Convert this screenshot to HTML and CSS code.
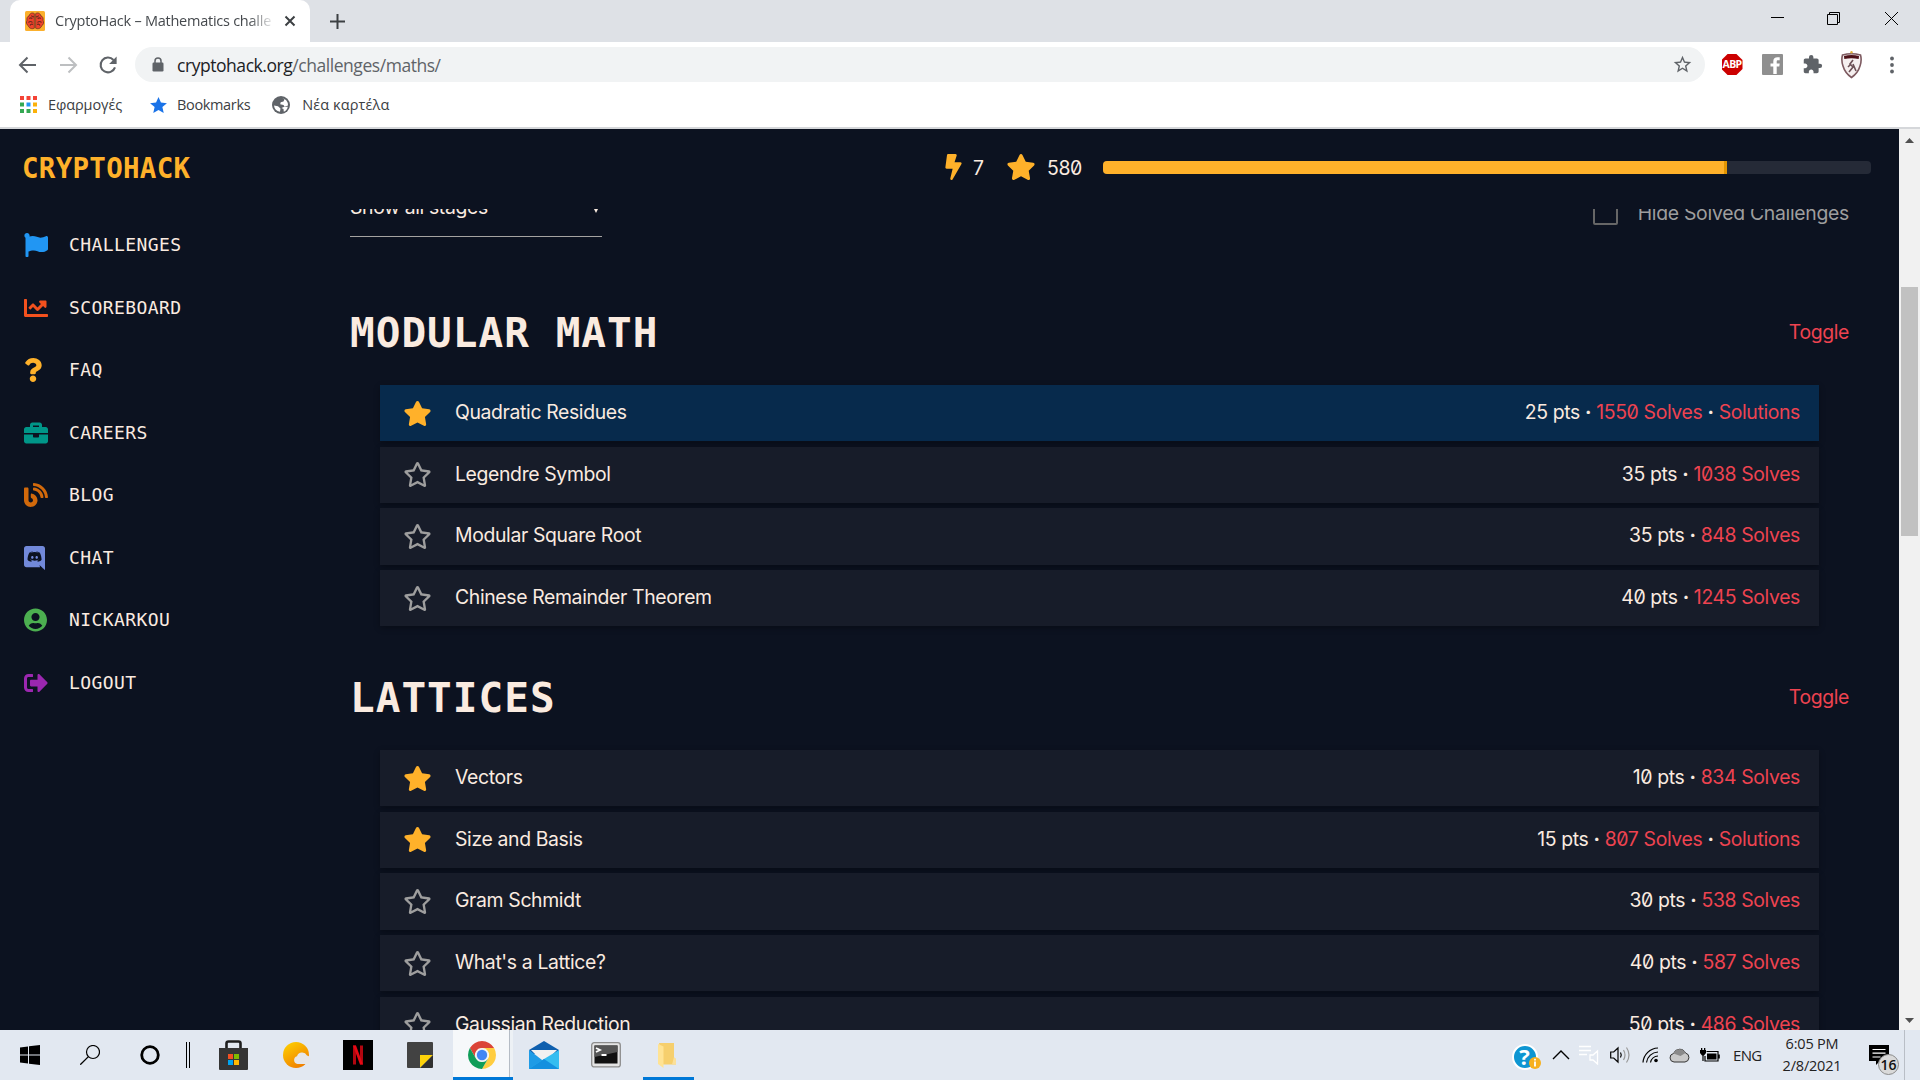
FILE: index.html
```
<!DOCTYPE html>
<html lang="en">
<head>
<meta charset="utf-8">
<title>CryptoHack – Mathematics challenges</title>
<link rel="stylesheet" href="styles.css">
</head>
<body>
<svg class="defs" width="0" height="0" aria-hidden="true">
  <symbol id="star" viewBox="0 0 576 512"><path d="M259.3 17.8L194 150.2 47.9 171.5c-26.2 3.8-36.7 36.1-17.7 54.6l105.7 103-25 145.5c-4.5 26.3 23.2 46 46.4 33.7L288 439.6l130.7 68.7c23.2 12.2 50.9-7.4 46.4-33.7l-25-145.5 105.7-103c19-18.5 8.5-50.8-17.7-54.6L382 150.2 316.7 17.8c-11.7-23.6-45.6-23.9-57.4 0z"/></symbol>
  <symbol id="star-open" viewBox="0 0 576 512"><path d="M528.1 171.5L382 150.2 316.7 17.8c-11.7-23.6-45.6-23.9-57.4 0L194 150.2 47.9 171.5c-26.2 3.8-36.7 36.1-17.7 54.6l105.7 103-25 145.5c-4.5 26.3 23.2 46 46.4 33.7L288 439.6l130.7 68.7c23.2 12.2 50.9-7.4 46.4-33.7l-25-145.5 105.7-103c19-18.5 8.5-50.8-17.7-54.6zM388.6 312.3l23.7 138.4L288 385.4l-124.3 65.3 23.7-138.4-100.6-98 139-20.2 62.2-126 62.2 126 139 20.2-100.6 98z"/></symbol>
</svg>

<div class="tabstrip">
  <div class="tab">
    <svg class="favicon" viewBox="0 0 20 20"><rect width="20" height="20" rx="1.5" fill="#fbb02d"/><path d="M9.3 2.6C7 1.2 4.6 2.6 4.4 4.6 2.2 5.4 1.6 7.400 2 9.200 .9 11.200 1.400 13.800 3.300 14.700 3.800 17 6.700 18.500 9.300 17.200zM10.700 2.600C13 1.200 15.400 2.600 15.600 4.600 17.800 5.400 18.400 7.400 18 9.200 19.100 11.200 18.600 13.800 16.700 14.700 16.200 17 13.300 18.500 10.700 17.200z" fill="#f0432b" stroke="#7a3524" stroke-width=".9"/><path d="M4.200 7.500q2-1.500 3 .500M3.500 11.500q2-2 4 0M5 14.500q1-2 3-1M15.800 7.500q-2-1.500-3 .500M16.500 11.500q-2-2-4 0M15 14.500q-1-2-3-1M6.500 4.500q1 2 2.500 1M13.500 4.500q-1 2-2.500 1" fill="none" stroke="#6b2a20" stroke-width="1.100"/></svg>
    <span class="tab-title">CryptoHack – Mathematics challe</span>
    <svg class="tab-close" viewBox="0 0 12 12"><path d="M1.500 1.500l9 9M10.500 1.500l-9 9" stroke="#3c4043" stroke-width="2"/></svg>
  </div>
  <svg class="new-tab" viewBox="0 0 15 15"><path d="M7.500 0v15M0 7.500h15" stroke="#3c4043" stroke-width="2"/></svg>
  <div class="window-controls">
    <svg width="57" height="42" viewBox="0 0 57 42"><path d="M22 17.500h13" stroke="#000"/></svg>
    <svg width="57" height="42" viewBox="0 0 57 42"><path d="M21.500 14.500h10v10h-10zM23.500 14v-1.500h10v10H32" stroke="#000" fill="none"/></svg>
    <svg width="57" height="42" viewBox="0 0 57 42"><path d="M22 12l13 13M35 12l-13 13" stroke="#000"/></svg>
  </div>
</div>

<div class="toolbar">
  <div class="nav-buttons">
    <svg viewBox="0 0 20 20"><path d="M18 10H2.500M9.500 2.500L2 10l7.500 7.500" stroke="#5f6368" stroke-width="2" fill="none"/></svg>
    <svg viewBox="0 0 20 20"><path d="M2 10h15.500M10.500 2.500L18 10l-7.500 7.500" stroke="#bdbfc1" stroke-width="2" fill="none"/></svg>
    <svg viewBox="0 0 20 20"><path d="M15.500 5A7.400 7.400 0 1 0 17 12.400" stroke="#5f6368" stroke-width="2.100" fill="none"/><path d="M18.600 1.600v7.500h-7.500z" fill="#5f6368"/></svg>
  </div>
  <div class="omnibox">
    <svg class="lock" viewBox="0 0 12 15"><path d="M3 6V4a3 3 0 0 1 6 0v2" fill="none" stroke="#5f6368" stroke-width="1.500"/><rect x=".5" y="5.500" width="11" height="9" rx="1.200" fill="#5f6368"/></svg>
    <span class="url">cryptohack.org<span class="path">/challenges/maths/</span></span>
    <svg class="bookmark-star" viewBox="0 0 24 24"><path d="M22 9.240l-7.190-.620L12 2 9.190 8.630 2 9.240l5.460 4.730L5.820 21 12 17.270 18.180 21l-1.630-7.030L22 9.240zM12 15.400l-3.760 2.270 1-4.280-3.320-2.880 4.380-.380L12 6.100l1.710 4.040 4.380.380-3.320 2.880 1 4.280L12 15.400z" fill="#5f6368"/></svg>
  </div>
  <div class="extensions">
    <div class="ext"><span class="abp">ABP</span></div>
    <div class="ext"><svg width="21" height="21" viewBox="0 0 21 21"><rect width="21" height="21" rx="1" fill="#8f8f8f"/><path d="M11.300 20v-7.500H8.500V9.400h2.800V7.200c0-2.700 1.600-4 4.200-4h2.200v3h-1.500c-1.200 0-1.500.5-1.500 1.400v1.800h3l-.4 3.100h-2.600V20z" fill="#fff"/></svg></div>
    <div class="ext"><svg width="21" height="21" viewBox="0 0 24 24"><path d="M20.500 11H19V7c0-1.100-.9-2-2-2h-4V3.500a2.500 2.500 0 0 0-5 0V5H4c-1.100 0-1.990.9-1.990 2v3.800H3.500c1.490 0 2.700 1.210 2.700 2.700s-1.210 2.700-2.700 2.700H2V20c0 1.100.9 2 2 2h3.800v-1.500c0-1.490 1.210-2.700 2.700-2.700s2.700 1.210 2.700 2.700V22H17c1.100 0 2-.9 2-2v-4h1.500a2.500 2.500 0 0 0 0-5z" fill="#5f6368"/></svg></div>
    <div class="ext crest"><svg width="21" height="28" viewBox="0 0 21 28"><path d="M1.500 4q9-2.500 18 0 1.500 5-.5 11-2 7-8.500 11.500Q4 22 2 15 0 9 1.500 4z" fill="#f5efef" stroke="#7d5a60" stroke-width="1.600"/><path d="M3 5q7.500-2 15 0l-.3 3q-7.200-1.500-14.400 0z" fill="#4d1118"/><path d="M12 9l-3 4 3 3-4 5M12 13l3 7M9 14l-2 2" stroke="#6b5055" stroke-width="1.600" fill="none"/><circle cx="10.500" cy="1.200" r="1.200" fill="#e0b03c"/></svg></div>
    <div class="ext"><svg width="4" height="18" viewBox="0 0 4 18"><circle cx="2" cy="2.500" r="1.900"/><circle cx="2" cy="9" r="1.900"/><circle cx="2" cy="15.500" r="1.900"/></svg></div>
  </div>
</div>

<div class="bookmarks">
  <svg class="apps" viewBox="0 0 17 17"><path d="M0 0h4v4H0zM6.500 0h4v4h-4zM13 0h4v4h-4z" fill="#f44336"/><path d="M0 6.500h4v4H0zM0 13h4v4H0z" fill="#34a853"/><path d="M6.500 6.500h4v4h-4z" fill="#2196f3"/><path d="M6.500 13h4v4h-4z" fill="#34a853"/><path d="M13 6.500h4v4h-4zM13 13h4v4h-4z" fill="#fbb10a"/></svg>
  <span class="bm-apps">Εφαρμογές</span>
  <svg class="bm-star" viewBox="0 0 20 19"><path d="M10 0l2.900 6.600 7.100.7-5.400 4.700 1.600 7L10 15.300 3.800 19l1.600-7L0 7.300l7.100-.7z" fill="#1a73e8"/></svg>
  <span class="bm-text">Bookmarks</span>
  <svg class="globe" viewBox="0 0 18 18"><circle cx="9" cy="9" r="9" fill="#5f6368"/><path d="M2 9.500l4 .8 2.500 2.200-.5 3.300A7.200 7.200 0 0 1 2 9.500zM10 2l2.500 1.200-1 2.300-2.800.8-.5 2 3.300.7 1 1.500 3.300.3q-.6 3.500-4 5l-.3-2.800L9.500 12l3.300-1.500L16 9.500A7.200 7.200 0 0 0 10 2z" fill="#fff"/></svg>
  <span class="bm-text bm-greek">Νέα καρτέλα</span>
</div>

<div class="page">
  <div class="site">
    <header class="site-header">
      <div class="brand">CRYPTOHACK</div>
      <div class="stats">
        <svg class="bolt" viewBox="0 0 320 512"><path d="M296 160H180.600l42.600-129.800C227.200 15 215.700 0 200 0H56C44 0 33.800 8.900 32.200 20.800l-32 240C-1.700 275.200 9.500 288 24 288h118.700L96.600 482.500c-3.600 15.200 8 29.500 23.300 29.500 8.400 0 16.400-4.400 20.800-12l176-304c9.300-15.900-2.200-36-20.700-36z"/></svg>
        <span class="level">7</span>
        <svg class="score-star"><use href="#star"/></svg>
        <span class="score">580</span>
        <div class="progress"><div class="progress-fill" style="width:81.25%"></div></div>
      </div>
    </header>
    <div class="body">
      <nav class="sidebar">
        <a><svg viewBox="0 0 512 512" fill="#2196f3"><path d="M349.565 98.783C295.978 98.783 251.721 64 184.348 64c-24.955 0-47.309 4.384-68.045 12.013a55.947 55.947 0 0 0 3.586-23.562C118.117 24.015 94.806 1.206 66.338.048 34.345-1.254 8 24.296 8 56c0 19.026 9.497 35.825 24 45.945V488c0 13.255 10.745 24 24 24h16c13.255 0 24-10.745 24-24v-94.400c28.311-12.064 63.582-22.122 114.435-22.122 53.588 0 97.844 34.783 165.217 34.783 48.169 0 86.667-16.294 122.505-40.858C506.840 359.452 512 349.571 512 339.045v-243.100c0-23.393-24.269-38.870-45.485-29.016-34.338 15.948-76.454 31.854-116.950 31.854z"/></svg>CHALLENGES</a>
        <a><svg viewBox="0 0 512 512" fill="#f4511e"><path d="M496 384H64V80c0-8.840-7.160-16-16-16H16C7.160 64 0 71.160 0 80v336c0 17.670 14.330 32 32 32h464c8.840 0 16-7.160 16-16v-32c0-8.840-7.160-16-16-16zM464 96H345.940c-21.380 0-32.090 25.850-16.970 40.970l32.400 32.400L288 242.750l-73.370-73.370c-12.500-12.500-32.760-12.500-45.250 0l-68.690 68.690c-6.250 6.250-6.250 16.380 0 22.630l22.620 22.620c6.250 6.250 16.380 6.250 22.630 0L192 237.250l73.370 73.370c12.500 12.500 32.760 12.500 45.250 0l96-96 32.400 32.400c15.120 15.120 40.970 4.410 40.970-16.970V112c.01-8.840-7.150-16-15.990-16z"/></svg>SCOREBOARD</a>
        <a><svg viewBox="0 0 384 512" fill="#ffb12a"><path d="M202.021 0C122.202 0 70.503 32.703 29.914 91.026c-7.363 10.580-5.093 25.086 5.178 32.874l43.138 32.709c10.373 7.865 25.132 6.026 33.253-4.148 25.049-31.381 43.630-49.449 82.757-49.449 30.764 0 68.816 19.799 68.816 49.631 0 22.552-18.617 34.134-48.993 51.164-35.423 19.860-82.299 44.576-82.299 106.405V320c0 13.255 10.745 24 24 24h72.471c13.255 0 24-10.745 24-24v-5.773c0-42.860 125.268-44.645 125.268-160.627C377.504 66.256 286.902 0 202.021 0zM192 373.459c-38.196 0-69.271 31.075-69.271 69.271 0 38.195 31.075 69.270 69.271 69.270s69.271-31.075 69.271-69.271-31.075-69.270-69.271-69.270z"/></svg>FAQ</a>
        <a><svg viewBox="0 0 512 512" fill="#009688"><path d="M320 336c0 8.840-7.160 16-16 16h-96c-8.840 0-16-7.160-16-16v-48H0v144c0 25.600 22.400 48 48 48h416c25.600 0 48-22.400 48-48V288H320v48zm144-208h-80V80c0-25.600-22.400-48-48-48H176c-25.600 0-48 22.400-48 48v48H48c-25.600 0-48 22.400-48 48v80h512v-80c0-25.600-22.400-48-48-48zm-144 0H192V96h128v32z"/></svg>CAREERS</a>
        <a><svg viewBox="0 0 512 512" fill="#d2690b"><path d="M172.200 226.800c-14.600-2.900-28.200 8.900-28.200 23.800V301c0 10.200 7.100 18.400 16.700 22 18.200 6.800 31.300 24.400 31.300 45 0 26.500-21.500 48-48 48s-48-21.500-48-48V120c0-13.300-10.700-24-24-24H24c-13.300 0-24 10.700-24 24v248c0 89.500 82.100 160.200 175 140.700 54.400-11.400 98.300-55.400 109.700-109.700 17.400-82.900-37-157.200-112.500-172.200zM209 0c-9.200-.5-17 6.800-17 16v31.600c0 8.500 6.600 15.500 15 15.900 129.400 7 233.400 112 240.900 241.500.5 8.400 7.500 15 15.900 15h32.100c9.200 0 16.500-7.800 16-17C503.400 139.800 372.200 8.600 209 0zm.3 96c-9.300-.7-17.300 6.700-17.300 16.100v32.100c0 8.400 6.500 15.300 14.800 15.900 76.800 6.300 138 68.200 144.900 145.200.8 8.300 7.600 14.700 15.900 14.700h32.200c9.300 0 16.800-8 16.100-17.300-8.400-110.100-96.500-198.200-206.600-206.700z"/></svg>BLOG</a>
        <a><svg viewBox="0 0 448 512" fill="#7289da"><path d="M297.216 243.200c0 15.616-11.520 28.416-26.112 28.416-14.336 0-26.112-12.800-26.112-28.416s11.520-28.416 26.112-28.416c14.592 0 26.112 12.800 26.112 28.416zm-119.552-28.416c-14.592 0-26.112 12.800-26.112 28.416s11.776 28.416 26.112 28.416c14.592 0 26.112-12.800 26.112-28.416.256-15.616-11.520-28.416-26.112-28.416zM448 52.736V512c-64.494-56.994-43.868-38.128-118.784-107.776l13.568 47.360H52.480C23.552 451.584 0 428.032 0 398.848V52.736C0 23.552 23.552 0 52.480 0h343.040C424.448 0 448 23.552 448 52.736zm-72.960 242.688c0-82.432-36.864-149.248-36.864-149.248-36.864-27.648-71.936-26.880-71.936-26.880l-3.584 4.096c43.520 13.312 63.744 32.512 63.744 32.512-60.811-33.329-132.244-33.335-191.232-7.424-9.472 4.352-15.104 7.424-15.104 7.424s21.248-20.224 67.328-33.536l-2.560-3.072s-35.072-.768-71.936 26.880c0 0-36.864 66.816-36.864 149.248 0 0 21.504 37.120 78.080 38.912 0 0 9.472-11.520 17.152-21.248-32.512-9.728-44.800-30.208-44.800-30.208 3.766 2.636 9.976 6.053 10.496 6.400 43.210 24.198 104.588 32.126 159.744 8.960 8.960-3.328 18.944-8.192 29.440-15.104 0 0-12.800 20.992-46.336 30.464 7.680 9.728 16.896 20.736 16.896 20.736 56.576-1.792 78.336-38.912 78.336-38.912z"/></svg>CHAT</a>
        <a><svg viewBox="0 0 496 512" fill="#4caf50"><path d="M248 8C111 8 0 119 0 256s111 248 248 248 248-111 248-248S385 8 248 8zm0 96c48.600 0 88 39.400 88 88s-39.400 88-88 88-88-39.400-88-88 39.400-88 88-88zm0 344c-58.700 0-111.300-26.600-146.500-68.200 18.800-35.400 55.600-59.800 98.500-59.800 2.400 0 4.800.4 7.100 1.100 13 4.200 26.600 6.900 40.900 6.900 14.300 0 28-2.700 40.900-6.900 2.300-.7 4.700-1.100 7.100-1.100 42.900 0 79.700 24.400 98.500 59.800C359.300 421.400 306.700 448 248 448z"/></svg>NICKARKOU</a>
        <a><svg viewBox="0 0 512 512" fill="#9c27b0"><path d="M497 273L329 441c-15 15-41 4.500-41-17v-96H152c-13.300 0-24-10.700-24-24v-96c0-13.300 10.700-24 24-24h136V88c0-21.400 25.900-32 41-17l168 168c9.300 9.400 9.300 24.600 0 34zM192 436v-40c0-6.600-5.400-12-12-12H96c-17.700 0-32-14.300-32-32V160c0-17.700 14.300-32 32-32h84c6.600 0 12-5.400 12-12V76c0-6.600-5.400-12-12-12H96c-53 0-96 43-96 96v192c0 53 43 96 96 96h84c6.600 0 12-5.400 12-12z"/></svg>LOGOUT</a>
      </nav>
      <main class="content">
        <div class="filters">
          <div class="select"><span>Show all stages</span><span class="caret"></span></div>
          <label class="hide-solved"><span class="box"></span>Hide Solved Challenges</label>
        </div>
        <section>
          <div class="section-head"><h2>MODULAR MATH</h2><a class="link">Toggle</a></div>
          <ul>
            <li class="solved"><svg><use href="#star"/></svg><span class="name">Quadratic Residues</span><span>25 pts <b>·</b> <a class="link">1550 Solves</a> <b>·</b> <a class="link">Solutions</a></span></li>
            <li><svg class="open"><use href="#star-open"/></svg><span class="name">Legendre Symbol</span><span>35 pts <b>·</b> <a class="link">1038 Solves</a></span></li>
            <li><svg class="open"><use href="#star-open"/></svg><span class="name">Modular Square Root</span><span>35 pts <b>·</b> <a class="link">848 Solves</a></span></li>
            <li><svg class="open"><use href="#star-open"/></svg><span class="name">Chinese Remainder Theorem</span><span>40 pts <b>·</b> <a class="link">1245 Solves</a></span></li>
          </ul>
        </section>
        <section>
          <div class="section-head"><h2>LATTICES</h2><a class="link">Toggle</a></div>
          <ul>
            <li><svg><use href="#star"/></svg><span class="name">Vectors</span><span>10 pts <b>·</b> <a class="link">834 Solves</a></span></li>
            <li><svg><use href="#star"/></svg><span class="name">Size and Basis</span><span>15 pts <b>·</b> <a class="link">807 Solves</a> <b>·</b> <a class="link">Solutions</a></span></li>
            <li><svg class="open"><use href="#star-open"/></svg><span class="name">Gram Schmidt</span><span>30 pts <b>·</b> <a class="link">538 Solves</a></span></li>
            <li><svg class="open"><use href="#star-open"/></svg><span class="name">What's a Lattice?</span><span>40 pts <b>·</b> <a class="link">587 Solves</a></span></li>
            <li><svg class="open"><use href="#star-open"/></svg><span class="name">Gaussian Reduction</span><span>50 pts <b>·</b> <a class="link">486 Solves</a></span></li>
          </ul>
        </section>
      </main>
    </div>
  </div>
  <div class="scrollbar">
    <svg class="arrow" viewBox="0 0 9 5"><path d="M0 5L4.500 0 9 5z" fill="#505050"/></svg>
    <div class="thumb"></div>
    <svg class="arrow down" viewBox="0 0 9 5"><path d="M0 0h9L4.500 5z" fill="#505050"/></svg>
  </div>
</div>

<div class="taskbar">
  <div class="sys"><svg width="20" height="20" viewBox="0 0 20 20"><path d="M0 2.500l8-1.100v8.100H0zM9 1.200L20 0v9.500H9zM0 10.500h8v8.100l-8-1.100zM9 10.500h11V20L9 18.800z"/></svg></div>
  <div class="sys"><svg width="20" height="20" viewBox="0 0 20 20"><circle cx="13" cy="7" r="6.500" fill="none" stroke="#000" stroke-width="1.200"/><path d="M8.400 11.600L.3 19.700" stroke="#000" stroke-width="1.300"/></svg></div>
  <div class="sys"><svg width="20" height="20" viewBox="0 0 20 20"><circle cx="10" cy="10" r="8.300" fill="none" stroke="#000" stroke-width="2.800"/></svg></div>
  <div class="splitter"></div>
  <div class="app"><svg width="29" height="30" viewBox="0 0 29 30"><path d="M7.500 9V3.500q0-2 2-2h10q2 0 2 2V9" fill="none" stroke="#1e1e1e" stroke-width="2.600"/><path d="M0 8h29v21q0 1-1 1H1q-1 0-1-1z" fill="#353535"/><path d="M9 14h5v5H9z" fill="#f25022"/><path d="M15 14h5v5h-5z" fill="#7fba00"/><path d="M9 20h5v5H9z" fill="#00a4ef"/><path d="M15 20h5v5h-5z" fill="#ffb900"/></svg></div>
  <div class="app weather"><svg width="30" height="26" viewBox="0 0 30 26"><defs><linearGradient id="sun" x1="0" y1="0" x2=".6" y2="1"><stop offset="0" stop-color="#ffd500"/><stop offset="1" stop-color="#f08000"/></linearGradient></defs><circle cx="14" cy="13" r="13" fill="url(#sun)"/><path d="M15.500 22a4 4 0 0 1-.5-7.800 5.500 5.500 0 0 1 10-.7A4.500 4.500 0 0 1 26 22z" fill="#e6e6e8"/></svg></div>
  <div class="app"><svg width="30" height="30" viewBox="0 0 30 30"><path d="M0 0h30v30H0z"/><path d="M10 5.500h3v19h-3zM17 5.500h3v19h-3z" fill="#b1060f"/><path d="M10 5.500h3l7 19h-3z" fill="#e50914"/></svg></div>
  <div class="app"><svg width="26" height="26" viewBox="0 0 26 26"><path d="M1 0h24q1 0 1 1v12L13 26H1q-1 0-1-1V1q0-1 1-1z" fill="#424242"/><path d="M13 13h13L13 26z" fill="#fdd20a"/><path d="M26 13v12q0 1-1 1H13z" fill="#303030"/></svg></div>
  <div class="app active"><svg width="28" height="28" viewBox="0 0 28 28"><path d="M1.900 7A14 14 0 0 1 26.100 7H14a7 7 0 0 0-6.100 10.500z" fill="#db4437"/><path d="M26.120 7A14 14 0 0 1 14 28l6.100-10.500A7 7 0 0 0 14 7z" fill="#ffcd40"/><path d="M1.900 7A14 14 0 0 0 14 28l6.100-10.500a7 7 0 0 1-12.200 0z" fill="#0f9d58"/><circle cx="14" cy="14" r="6.600" fill="#f1f1f1"/><circle cx="14" cy="14" r="5.200" fill="#4285f4"/></svg></div>
  <div class="app"><svg width="30" height="28" viewBox="0 0 30 28"><path d="M0 9L15 0l15 9-3 4H3z" fill="#0f5fae"/><path d="M2 9h26L15 22z" fill="#f1f1f1"/><path d="M0 9l17 13 4 6H0z" fill="#1e9be6"/><path d="M30 9v19H0l15-10z" fill="#35bdf0"/><path d="M0 28l15-10 15 10z" fill="#1490df"/></svg></div>
  <div class="app"><svg width="30" height="26" viewBox="0 0 30 26"><rect x=".7" y=".7" width="28.600" height="24.200" rx="2.500" fill="#e4e4e4" stroke="#8d8d8d" stroke-width="1.300"/><path d="M3.500 3.500h23v18h-23z" fill="#111"/><path d="M3.500 3.500h23V10L3.500 15z" fill="#555"/><path d="M5 6l4 2-4 2M10.500 13h5" fill="none" stroke="#fff" stroke-width="1.800"/></svg></div>
  <div class="app running"><svg width="19" height="26" viewBox="0 0 19 26"><path d="M1 1h15v15l2 1v5.500H5z" fill="#f6cf6d"/><path d="M0 2l5.500 2.500V26L0 22z" fill="#ffe394"/><path d="M16 15l2 2v5.500h-4z" fill="#fbe09a"/></svg></div>
  <div class="tray">
    <div class="t-help"><svg width="29" height="26" viewBox="0 0 29 26"><circle cx="13" cy="13" r="12" fill="#0e96d2" stroke="#fff" stroke-width="2"/><text x="12.500" y="20.500" text-anchor="middle" class="q">?</text><circle cx="23" cy="19" r="6" fill="#f7b01d"/><path d="M23 17.500v5M23 14.800v1.600" stroke="#fff" stroke-width="1.800"/></svg></div>
    <div class="t-chev"><svg width="18" height="10" viewBox="0 0 18 10"><path d="M1 9l8-8 8 8" fill="none" stroke="#000" stroke-width="1.400"/></svg></div>
    <div class="t-icon"><svg width="20" height="20" viewBox="0 0 20 20"><path d="M0 1.500h12M0 5.500h12M0 9.500h8M11 10h3l4.500-4v13L14 15h-3z" fill="none" stroke="#fff" stroke-width="1.300"/></svg></div>
    <div class="t-vol"><svg width="21" height="18" viewBox="0 0 21 18"><path d="M.7 6h3L8 2v14l-4.300-4h-3z" fill="none" stroke="#000" stroke-width="1.200"/><path d="M10.500 6.500q1.500 2.500 0 5" fill="none" stroke="#000" stroke-width="1.200"/><path d="M13.500 4q3 5 0 10M16.500 1.500q5 7.500 0 15" fill="none" stroke="#999" stroke-width="1.200"/></svg></div>
    <div class="t-wifi"><svg width="17" height="16" viewBox="0 0 17 16"><path d="M1 15.500A15.500 15.500 0 0 1 16 1M4.500 15.500A12 12 0 0 1 16 5M8.500 15.500A8 8 0 0 1 16 9" fill="none" stroke="#000" stroke-width="1.200"/><circle cx="14" cy="13.500" r="1.800"/></svg></div>
    <div class="t-cloud"><svg width="21" height="15" viewBox="0 0 21 15"><path d="M5 14a4.300 4.300 0 0 1-.5-8.500 6.500 6.500 0 0 1 12-.5A4.600 4.600 0 0 1 16 14z" fill="#c9c9c9" stroke="#333"/><path d="M4.500 5.500a6.500 6.500 0 0 1 12-.5l-5 3z" fill="#8a8a8a"/></svg></div>
    <div class="t-batt"><svg width="20" height="15" viewBox="0 0 20 15"><path d="M6.500 3.500h11.500v9.500H5V8" fill="none" stroke="#000" stroke-width="1.200"/><path d="M7 5.500h9.500v6H7zM18 6.500h1.800v4H18zM0 2h6v3L4 7.500H2L0 5zM1 0h1.300v2H1zM4 0h1.300v2H4z"/><path d="M3 7v6" stroke="#000" stroke-width="1.200"/></svg></div>
    <div class="t-lang">ENG</div>
    <div class="t-clock"><div>6:05 PM</div><div>2/8/2021</div></div>
    <div class="t-notif"><svg width="31" height="30" viewBox="0 0 31 30"><path d="M0 0h20v16h-9l-4 4v-4H0z"/><path d="M3.500 4.500h13M3.500 8.200h13M3.500 12h8" stroke="#fff" stroke-width="1.200"/><circle cx="19.500" cy="19.500" r="10" fill="#d9d9d9" stroke="#8a8a8a"/><text x="19.500" y="24.500" text-anchor="middle" class="count">16</text></svg></div>
    <div class="t-desk"></div>
  </div>
</div>
</body>
</html>
```
FILE: styles.css
```
* { box-sizing: border-box; }
body { margin: 0; width: 1920px; height: 1080px; overflow: hidden; display: flex; flex-direction: column; background: #fff; font-family: "Open Sans", sans-serif; }
svg { display: block; flex: none; }
.defs { display: none; }

/* Browser chrome */
.tabstrip { height: 42px; flex: none; background: #dee1e6; display: flex; align-items: center; padding-left: 10px; }
.tab { width: 300px; height: 42px; background: #fff; border-radius: 10px 10px 0 0; display: flex; align-items: center; padding-left: 15px; }
.favicon { width: 20px; height: 20px; }
.tab-title { width: 220px; margin-left: 10px; padding-bottom: 1px; font-size: 14.5px; letter-spacing: -.25px; color: #45494d; white-space: nowrap; overflow: hidden; -webkit-mask-image: linear-gradient(90deg, #000 88%, transparent 100%); mask-image: linear-gradient(90deg, #000 88%, transparent 100%); }
.tab-close { width: 12px; height: 12px; margin-left: 9px; }
.new-tab { width: 15px; height: 15px; margin-left: 20px; }
.window-controls { display: flex; margin-left: auto; }

.toolbar { height: 45px; flex: none; display: flex; align-items: center; padding-left: 7px; }
.nav-buttons { display: flex; gap: 20px; width: 128px; padding-left: 11px; }
.nav-buttons svg { width: 20px; height: 20px; }
.omnibox { width: 1570px; height: 35px; background: #f1f3f4; border-radius: 18px; display: flex; align-items: center; padding: 0 12px 0 17px; }
.lock { width: 12px; height: 15px; }
.url { margin-left: 13px; font-size: 17.5px; letter-spacing: -.45px; color: #202124; white-space: nowrap; }
.path { color: #5f6368; }
.bookmark-star { width: 21px; height: 21px; margin-left: auto; }
.extensions { display: flex; padding-left: 7px; }
.ext { width: 40px; height: 35px; display: flex; align-items: center; justify-content: center; fill: #5f6368; }
.crest { padding-right: 2px; }
.abp { width: 21px; height: 21px; background: #cc0000; clip-path: polygon(29% 0, 71% 0, 100% 29%, 100% 71%, 71% 100%, 29% 100%, 0 71%, 0 29%); color: #fff; font: bold 10.500px/21px "Open Sans", sans-serif; text-align: center; letter-spacing: -.7px; }

.bookmarks { height: 42px; flex: none; border-bottom: 2px solid #d5d7da; display: flex; align-items: center; padding: 0 0 5px 20px; font-size: 14.5px; letter-spacing: -.35px; color: #3c4043; }
.apps { width: 17px; height: 17px; }
.bm-apps { width: 102px; margin-left: 11px; letter-spacing: -.1px; }
.bm-star { width: 17px; height: 16px; }
.bm-text { margin-left: 10px; white-space: nowrap; }
.bm-greek { margin-left: 12px; letter-spacing: .1px; }
.globe { width: 18px; height: 18px; margin-left: 22px; }

/* Site */
.page { flex: 1; min-height: 0; display: flex; }
.site { width: 1899px; background: #0c1220; display: flex; flex-direction: column; color: #faebe0; font: 19.400px/1.500 Inter, sans-serif; letter-spacing: -.36px; font-feature-settings: "zero" 1; overflow: hidden; }
.site-header { height: 80px; flex: none; display: flex; align-items: center; justify-content: space-between; padding: 0 28px 3px 22px; }
.brand { font: bold 27.500px/40px "DejaVu Sans Mono", monospace; letter-spacing: .280px; color: #ffb12a; }
.stats { display: flex; align-items: center; fill: #ffb12a; }
.bolt { width: 17px; height: 26px; }
.level { width: 23px; margin: 2px 0 0 11px; }
.score-star { width: 30px; height: 26px; margin: 0 11px 0 10px; }
.score { width: 45px; margin: 2px 11px 0 0; }
.progress { width: 768px; height: 13px; background: #252a37; border-radius: 4px; overflow: hidden; }
.progress-fill { height: 13px; background: #ffb12a; border-right: 3px solid #e39502; }

.body { flex: 1; min-height: 0; display: flex; }
.sidebar { width: 350px; padding: 5px 0 0 24px; }
.sidebar a { height: 62.500px; display: flex; align-items: center; font: 18px/24px "DejaVu Sans Mono", monospace; letter-spacing: .41px; }
.sidebar svg { width: 24px; height: 24px; margin-right: 21px; }
.sidebar svg[viewBox^="0 0 496"] { width: 23px; margin-right: 22px; }
.sidebar svg[viewBox^="0 0 448"] { width: 21px; margin-right: 24px; }
.sidebar svg[viewBox^="0 0 384"] { width: 18px; margin-right: 27px; }

.content { width: 1499px; height: 821px; overflow-y: clip; }
.filters { display: flex; justify-content: space-between; height: 50px; }
.select { width: 252px; height: 55px; margin-top: -27px; border-bottom: 1px solid #a5a3a1; display: flex; align-items: center; justify-content: space-between; padding: 0 2px 3px 0; flex: none; }
.caret { border: 3.500px solid transparent; border-top: 6px solid #faebe0; border-bottom: 0; margin: 5px 1px 0 0; }
.hide-solved { display: flex; align-items: center; height: 30px; margin-top: -10px; color: #9e9e9e; gap: 20px; letter-spacing: -.3px; }
.box { width: 25px; height: 25px; border: 2px solid #666; border-radius: 2px; margin-bottom: 3px; }
.section-head { height: 126px; display: flex; align-items: center; justify-content: space-between; padding-top: 22px; }
h2 { margin: 0; font: bold 41px/60px "DejaVu Sans Mono", monospace; letter-spacing: 1.020px; }
.link { color: #ee4350; }
section { height: 365px; }
ul { list-style: none; margin: 0; padding: 0 30px; display: flex; flex-direction: column; gap: 5.300px; }
li { height: 56.350px; flex: none; background: #171c29; box-shadow: 0 2px 6px rgba(0, 0, 0, .3); display: flex; align-items: center; padding: 0 19px 0 23px; white-space: nowrap; }
li.solved { background: #072a4c; }
li svg { width: 29px; height: 25px; fill: #ffb12a; margin-right: 23px; }
li svg.open { fill: #9e9e9e; }
li > span { margin-top: -1px; }
.name { flex: 1; }

.scrollbar { width: 21px; background: #f1f1f1; display: flex; flex-direction: column; align-items: center; }
.arrow { width: 9px; height: 5px; margin-top: 9px; }
.thumb { width: 17px; height: 249px; background: #c1c1c1; margin-top: 144px; }
.down { margin: auto 0 7px; }

/* Taskbar */
.taskbar { height: 50px; flex: none; background: #e2e8f1; display: flex; }
.sys, .app { height: 50px; display: flex; align-items: center; justify-content: center; flex: none; }
.sys { width: 60px; }
.app { width: 62px; }
.weather { padding-left: 3px; }
.splitter { width: 4px; height: 26px; margin: 12px 12.500px 0 6px; border: solid #000; border-width: 0 1px; flex: none; }
.active { background: linear-gradient(#0078d7, #0078d7) 2px 47px / 61px 3px no-repeat, linear-gradient(90deg, transparent 2px, #f6f8fa 2px, #f6f8fa 58px, #b5bcc5 58px, #b5bcc5 59px, #edf1f5 59px); padding-left: 1px; }
.running { background: linear-gradient(#0078d7, #0078d7) 6px 47px / 51px 3px no-repeat; }
.tray { margin-left: auto; display: flex; width: 420px; color: #222; }
.tray > div { display: flex; align-items: center; flex: none; }
.t-help { width: 52px; padding: 3px 0 0 12px; }
.q { font: bold 22px "Open Sans", sans-serif; fill: #fff; }
.t-chev { width: 27px; }
.t-icon { width: 31px; }
.t-vol { width: 32px; }
.t-wifi { width: 27px; }
.t-cloud { width: 31px; }
.t-batt { width: 33px; }
.tray .t-lang { width: 32px; font-size: 15px; letter-spacing: -.7px; }
.tray .t-clock { width: 94px; flex-direction: column; justify-content: center; font-size: 14.500px; line-height: 22.500px; letter-spacing: -.2px; }
.t-notif { width: 45px; padding: 10px 0 0 10px; }
.count { font: 600 14px "Open Sans", sans-serif; fill: #111; }
.t-desk { width: 1px; background: #b9bec6; }
```
